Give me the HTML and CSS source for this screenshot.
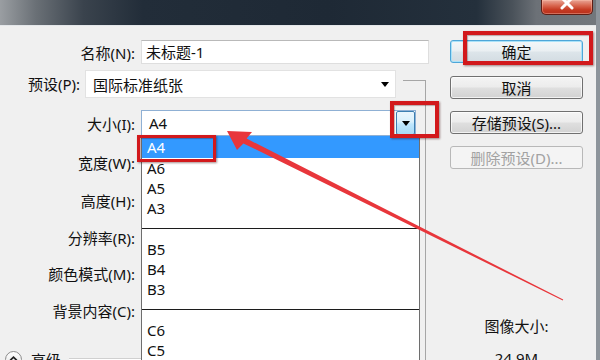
FILE: index.html
```html
<!DOCTYPE html>
<html lang="zh-CN">
<head>
<meta charset="utf-8">
<title>新建</title>
<link rel="stylesheet" href="styles.css">
</head>
<body>
<div class="window">
  <div class="titlebar">
    <div class="close-btn">
      <svg width="52" height="15" viewBox="0 0 52 15"><path d="M21 -2 L31 8 M31 -2 L21 8" stroke="#fff" stroke-width="3" stroke-linecap="round"/></svg>
    </div>
  </div>
  <div class="dialog">
    <div class="form">
      <div class="row row-name">
        <span class="label">名称(N):</span>
        <div class="textbox">未标题-1</div>
      </div>
      <fieldset class="group">
        <legend class="preset">
          <div class="preset-row">
            <span class="label label-preset">预设(P):</span>
            <div class="combo combo-preset"><span class="combo-text">国际标准纸张</span><span class="tri"></span></div>
          </div>
        </legend>
        <div class="row row-size">
          <span class="label">大小(I):</span>
          <div class="combo combo-size">
            <span class="combo-text">A4</span>
            <span class="drop-btn"><span class="tri"></span></span>
            <ul class="dropdown">
              <li class="item selected">A4</li>
              <li class="item">A6</li>
              <li class="item">A5</li>
              <li class="item">A3</li>
              <li class="sep"></li>
              <li class="item">B5</li>
              <li class="item">B4</li>
              <li class="item">B3</li>
              <li class="sep"></li>
              <li class="item">C6</li>
              <li class="item">C5</li>
            </ul>
          </div>
        </div>
        <div class="row row-w"><span class="label">宽度(W):</span></div>
        <div class="row row-h"><span class="label">高度(H):</span></div>
        <div class="row row-r"><span class="label">分辨率(R):</span></div>
        <div class="row row-m"><span class="label">颜色模式(M):</span></div>
        <div class="row row-c"><span class="label">背景内容(C):</span></div>
        <div class="row row-adv">
          <span class="adv-icon"><svg width="16" height="16" viewBox="0 0 16 16"><path d="M4.5 9.5 L8 6 L11.5 9.5" fill="none" stroke="#222" stroke-width="1.8"/></svg></span>
          <span class="adv-text">高级</span>
          <span class="adv-line"></span>
        </div>
      </fieldset>
    </div>
    <div class="side">
      <button class="btn btn-default">确定</button>
      <button class="btn btn-cancel">取消</button>
      <button class="btn btn-save">存储预设(S)...</button>
      <button class="btn btn-delete" disabled>删除预设(D)...</button>
      <div class="size-label">图像大小:</div>
      <div class="size-value">24.9M</div>
    </div>
  </div>
  <div class="mark mark-ok"></div>
  <div class="mark mark-drop"></div>
  <div class="mark mark-a4"></div>
  <svg class="arrow" width="600" height="360" viewBox="0 0 600 360">
    <polygon points="227,131 252,132 246.6,138.6 563.2,299.6 562.8,300.4 243.4,143.4 237,150" fill="#e8363b"/>
  </svg>
</div>
</body>
</html>
```

FILE: styles.css
```css
* { box-sizing: border-box; }

html, body {
  margin: 0;
  padding: 0;
}

body {
  font-family: "Noto Sans", "Noto Sans CJK SC", sans-serif;
  font-size: 15px;
  color: #111;
  background: #f0f0f0;
}

.window {
  position: relative;
  width: 600px;
  height: 360px;
  overflow: hidden;
  display: flex;
  flex-direction: column;
  border-right: 4px solid #8d949b;
}

.titlebar {
  height: 26px;
  flex-shrink: 0;
  display: flex;
  justify-content: flex-end;
  align-items: flex-start;
  padding-right: 3px;
  background: linear-gradient(90deg, #9a9ea2 0%, #6a7076 6%, #3a434d 14%, #222d39 24%, #1e2935 55%, #24303c 80%, #4a525a 86%, #6c7177 90%, #72777c 100%);
  border-bottom: 1px solid #e4e7ea;
}

.close-btn {
  width: 52px;
  height: 15px;
  border: 1px solid #5e1d14;
  border-top: none;
  border-radius: 0 0 5px 5px;
  background: linear-gradient(#e9a596 0%, #d8664f 40%, #c53a22 70%, #b7301c 100%);
  box-shadow: inset 0 0 0 1px rgba(255, 200, 180, 0.4);
}

.close-btn svg { display: block; margin-left: -1px; }

.dialog {
  flex: 1;
  min-height: 0;
  display: flex;
  background: #f0f0f0;
}

.form {
  width: 430px;
  flex-shrink: 0;
  display: flex;
  flex-direction: column;
  padding-top: 14px;
}

.row {
  display: flex;
  align-items: center;
  height: 24px;
  flex-shrink: 0;
}

.label {
  width: 141px;
  flex-shrink: 0;
  padding-right: 6px;
  text-align: right;
  white-space: nowrap;
  color: #111;
}

.textbox {
  width: 288px;
  height: 24px;
  line-height: 22px;
  padding-left: 4px;
  background: #fff;
  border: 1px solid #dedede;
  border-top-color: #b9b9b9;
  white-space: nowrap;
}

.group {
  width: 426px;
  flex: 1;
  min-width: 0;
  margin: 6px 0 0 0;
  padding: 0;
  border: none;
  border-top: 1px solid #a6a6a6;
  border-right: 1px solid #a6a6a6;
  display: flex;
  flex-direction: column;
}

.preset {
  height: 20px;
  padding: 0 7px 0 0;
  margin: 0;
}

.preset-row {
  display: flex;
  align-items: flex-start;
  height: 20px;
}

.label-preset {
  width: 85px;
  padding-right: 5px;
  height: 28px;
  line-height: 28px;
}

.combo {
  display: flex;
  align-items: center;
  background: #fff;
  white-space: nowrap;
}

.combo-text { flex: 1; }

.tri {
  width: 0;
  height: 0;
  border-left: 4px solid transparent;
  border-right: 4px solid transparent;
  border-top: 5px solid #000;
}

.combo-preset {
  width: 311px;
  height: 28px;
  padding: 0 6px 0 7px;
  border: 1px solid #e2e2e2;
}

.row-size { height: 26px; margin-top: 20px; }

.combo-size {
  position: relative;
  width: 275px;
  height: 26px;
  padding-left: 7px;
  border: 1px solid #8fb0d4;
}

.drop-btn {
  width: 19px;
  height: 100%;
  display: flex;
  align-items: center;
  justify-content: center;
  border: 1px solid #3c7fb1;
  border-radius: 2px;
  background: linear-gradient(#eaf6fd 0%, #d9f0fc 45%, #bee6fd 55%, #a7d9f5 100%);
}

.dropdown {
  position: absolute;
  left: -1px;
  top: 25px;
  width: 279px;
  height: 240px;
  margin: 0;
  padding: 0;
  list-style: none;
  background: #fff;
  border: 1px solid #6e6e6e;
  border-top: none;
  z-index: 2;
}

.item {
  height: 20px;
  line-height: 20px;
  padding-left: 5px;
  color: #111;
}

.item.selected {
  height: 22px;
  line-height: 22px;
  background: #3399ff;
  color: #fff;
}

.sep {
  height: 1px;
  margin: 10px 0;
  background: #1c1c1c;
}

.row-w { margin-top: 14px; }
.row-h { margin-top: 14px; }
.row-r { margin-top: 13px; }
.row-m { margin-top: 12px; }
.row-c { margin-top: 13px; }

.row-adv {
  margin-top: 25px;
  padding-left: 5px;
}

.adv-icon {
  width: 17px;
  height: 17px;
  border-radius: 50%;
  border: 1px solid #8c8c8c;
  background: linear-gradient(#ffffff, #e2e2e2);
  display: flex;
  align-items: center;
  justify-content: center;
  flex-shrink: 0;
}

.adv-icon svg { display: block; }

.adv-text { margin-left: 9px; }

.adv-line {
  flex: 1;
  margin-left: 8px;
  margin-right: 6px;
  border-top: 1px solid #d0d0d0;
  border-bottom: 1px solid #ffffff;
}

.side {
  flex: 1;
  display: flex;
  flex-direction: column;
  align-items: flex-start;
  padding: 14px 0 0 20px;
}

.btn {
  width: 133px;
  height: 23px;
  flex-shrink: 0;
  padding: 0;
  font-family: "Noto Sans", "Noto Sans CJK SC", sans-serif;
  font-size: 15px;
  line-height: 20px;
  color: #111;
  border: 1px solid #707070;
  border-radius: 3px;
  background: linear-gradient(#f4f4f4 0%, #ececec 48%, #dfdfdf 52%, #d2d2d2 100%);
  box-shadow: inset 0 0 0 1px rgba(255, 255, 255, 0.7);
}

.btn-default {
  border-color: #4ea6d8;
  box-shadow: inset 0 0 0 1px #a9e2f9;
  background: linear-gradient(#f3f7f9 0%, #eaeff2 48%, #dde5ea 52%, #d3dce2 100%);
}

.btn-cancel { margin-top: 13px; }
.btn-save { margin-top: 12px; }

.btn-delete {
  margin-top: 12px;
  color: #a2a2a2;
  border-color: #b8b8b8;
  background: #f4f4f4;
  box-shadow: none;
}

.size-label,
.size-value {
  width: 133px;
  text-align: center;
  height: 20px;
  line-height: 20px;
}

.size-label { margin-top: 147px; }
.size-value { margin-top: 12px; }

.mark {
  position: absolute;
  border: 4px solid #d2191c;
  box-shadow: 1px 1px 2px rgba(60, 0, 0, 0.45), inset 1px 1px 1px rgba(60, 0, 0, 0.3);
  z-index: 3;
}

.mark-ok { left: 463px; top: 31px; width: 130px; height: 34px; }
.mark-drop { left: 390px; top: 101px; width: 49px; height: 37px; }
.mark-a4 { left: 137px; top: 135px; width: 79px; height: 27px; border-width: 3px; }

.arrow {
  position: absolute;
  left: 0;
  top: 0;
  z-index: 4;
  pointer-events: none;
}
```
